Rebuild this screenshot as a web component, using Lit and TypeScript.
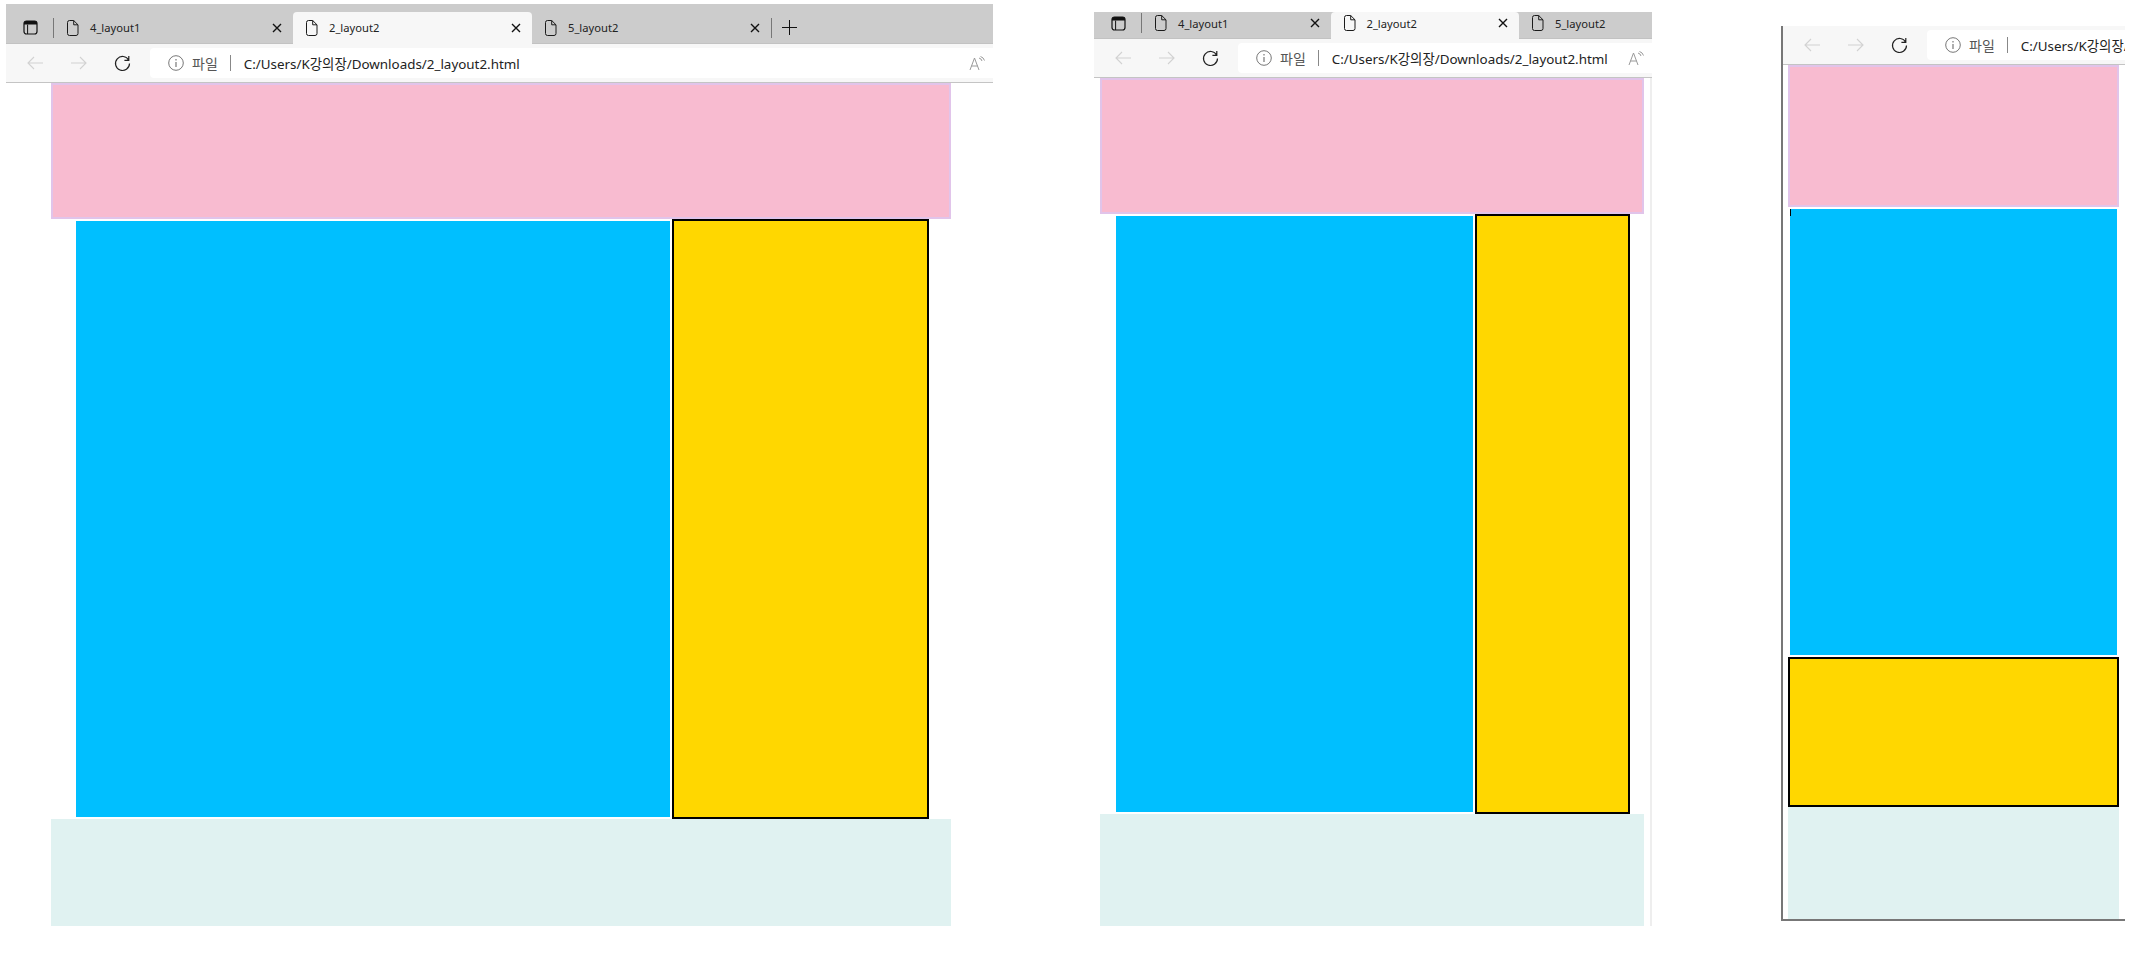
import { css, html, LitElement, svg } from 'lit';
import { customElement } from 'lit/decorators.js';

const URL_TEXT = 'C:/Users/K강의장/Downloads/2_layout2.html';

const docIcon = html`<svg class="doc" viewBox="0 0 13 16" width="13" height="16">
  <path d="M1.5 2.5a2 2 0 0 1 2-2h4.2l4.3 4.3v8.7a2 2 0 0 1-2 2h-6.5a2 2 0 0 1-2-2zM7.7.5v4.3H12" fill="none" stroke="#1a1a1a" stroke-width="1"/>
</svg>`;

const closeIcon = html`<svg class="close" viewBox="0 0 10 10" width="10" height="10">
  <path d="M1 1l8 8M9 1l-8 8" stroke="#111" stroke-width="1.4" fill="none"/>
</svg>`;

const layoutIcon = html`<svg class="layout" viewBox="0 0 15 15" width="15" height="15">
  <rect x="1" y="1" width="13" height="13" rx="2.5" fill="none" stroke="#111" stroke-width="1.2"/>
  <path d="M1 4.6V3.5A2.5 2.5 0 0 1 3.5 1h8A2.5 2.5 0 0 1 14 3.5v1.100z" fill="#111"/>
  <path d="M4.600 4.600V14" stroke="#111" stroke-width="1"/>
</svg>`;

const arrowPath = (flip: boolean) => svg`<path
  d=${flip ? 'M1 8h15M10 2l6 6-6 6' : 'M17 8H2M8 2L2 8l6 6'}
  fill="none" stroke="#d2d2d2" stroke-width="1.1"/>`;

interface WindowSpec {
  name: string;
  tabs: string[];
}

const WINDOWS: WindowSpec[] = [
  { name: 'w1', tabs: ['4_layout1', '2_layout2', '5_layout2'] },
  { name: 'w2', tabs: ['4_layout1', '2_layout2', '5_layout2'] },
  { name: 'w3', tabs: [] },
];

@customElement('app-root')
export class AppRoot extends LitElement {
  static styles = css`
    :host {
      display: flex;
      align-items: flex-start;
      height: 980px;
      overflow: hidden;
      background: #fff;
      font-family: 'Noto Sans', 'Noto Sans CJK KR', sans-serif;
    }
    svg {
      flex: none;
    }
    .window {
      flex: none;
      overflow: hidden;
    }
    .w1 {
      width: 987px;
      margin: 4px 0 0 6px;
    }
    .w2 {
      width: 558px;
      margin: 12px 0 0 101px;
    }
    .w3 {
      width: 342px;
      margin: 26px 0 0 129px;
      border-left: 2px solid #777;
      border-bottom: 2px solid #777;
    }
    .strip {
      display: flex;
      background: #ccc;
      overflow: hidden;
      box-shadow: inset 0 -1px #c2c2c2;
    }
    .w1 .strip {
      height: 40px;
      padding-top: 8px;
      box-sizing: border-box;
    }
    .w2 .strip {
      height: 27px;
    }
    .strip-start {
      flex: none;
      display: flex;
      align-items: center;
      width: 48px;
      padding-left: 17px;
      box-sizing: border-box;
    }
    .sep {
      flex: none;
      width: 1px;
      height: 20px;
      background: #777;
      margin-left: 15px;
    }
    .w1 .strip-start, .w1 .tab, .w1 .plus-box {
      padding-bottom: 1px;
    }
    .w2 .strip-start, .w2 .tab {
      padding-bottom: 5px;
    }
    .tab {
      flex: none;
      display: flex;
      align-items: center;
      gap: 11px;
      box-sizing: border-box;
      padding-left: 12px;
      padding-right: 11px;
      font-size: 11.2px;
      color: #222;
    }
    .w1 .tab {
      width: 239px;
    }
    .w2 .tab {
      width: 188.5px;
    }
    .tab.active {
      background: #f7f7f7;
      border-radius: 4px 4px 0 0;
    }
    .tab .title {
      flex: 1;
      white-space: nowrap;
    }
    .plus-box {
      flex: none;
      display: flex;
      align-items: center;
      gap: 10px;
    }
    .plus-sep {
      flex: none;
      width: 1px;
      height: 20px;
      background: #777;
    }
    .toolbar {
      display: flex;
      align-items: flex-start;
      height: 39px;
      box-sizing: border-box;
      padding: 4px 0 0 20px;
      background: #f7f7f7;
      border-bottom: 1px solid #c4c4c4;
    }
    .nav {
      flex: none;
      display: flex;
      align-items: center;
      height: 30px;
      gap: 26px;
      width: 124px;
    }
    .address {
      flex: 1;
      min-width: 0;
      display: flex;
      align-items: center;
      height: 30px;
      padding-left: 18px;
      padding-right: 8px;
      background: #fff;
      border-radius: 4px 0 0 4px;
      white-space: nowrap;
      overflow: hidden;
    }
    .scheme {
      margin-left: 8px;
      font-size: 14px;
      color: #555;
    }
    .bar {
      flex: none;
      width: 1px;
      height: 16px;
      background: #888;
      margin: 0 13px 0 12px;
    }
    .url {
      flex: 1;
      font-size: 13.4px;
      color: #222;
    }
    .pink {
      box-sizing: border-box;
      background: #f8bbd0;
      border: 2px solid #e1c4ea;
    }
    .main {
      display: flex;
    }
    .blue {
      flex: none;
      margin: 2px;
      background: #00bfff;
    }
    .gold {
      flex: none;
      box-sizing: border-box;
      background: #ffd700;
      border: 2px solid #000;
    }
    .mint {
      background: #e0f2f1;
    }

    .w1 .page {
      padding-left: 45px;
      width: 900px;
    }
    .w1 .pink { height: 136px; }
    .w1 .main { height: 600px; padding-left: 23px; }
    .w1 .blue { width: 594px; }
    .w1 .gold { width: 257px; }
    .w1 .mint { height: 107px; }

    .w2 .page {
      padding-left: 6px;
      width: 544px;
      padding-right: 6px;
      border-right: 2px solid #eee;
    }
    .w2 .pink { height: 136px; }
    .w2 .main { height: 600px; padding-left: 14px; }
    .w2 .blue { width: 357px; }
    .w2 .gold { width: 155px; }
    .w2 .mint { height: 112px; }

    .w3 .page {
      padding-left: 5px;
      width: 331px;
    }
    .w3 .pink { height: 142px; }
    .w3 .stack {
      display: flex;
      flex-direction: column;
      position: relative;
    }
    .w3 .blue { height: 446px; }
    .w3 .gold { height: 150px; }
    .w3 .mint { height: 112px; }
    .caret {
      position: absolute;
      left: 2px;
      top: 2px;
      width: 1px;
      height: 7px;
      background: #000;
    }
  `;

  private _renderStrip(spec: WindowSpec) {
    return html`
      <div class="strip">
        <div class="strip-start">${layoutIcon}<span class="sep"></span></div>
        ${spec.tabs.map((label, i) => html`
          <div class="tab ${i === 1 ? 'active' : ''}">
            ${docIcon}
            <span class="title">${label}</span>
            ${closeIcon}
          </div>
        `)}
        <div class="plus-box">
          <span class="plus-sep"></span>
          <svg viewBox="0 0 15 15" width="15" height="15">
            <path d="M7.500 0v15M0 7.500h15" stroke="#111" stroke-width="1"/>
          </svg>
        </div>
      </div>
    `;
  }

  private _renderToolbar() {
    return html`
      <div class="toolbar">
        <div class="nav">
          <svg viewBox="0 0 18 16" width="18" height="16">${arrowPath(false)}</svg>
          <svg viewBox="0 0 18 16" width="18" height="16">${arrowPath(true)}</svg>
          <svg viewBox="0 0 17 17" width="17" height="17">
            <path d="M14.700 5.200A7 7 0 1 0 15.500 8.500M14.800 1v4.400h-4.400" fill="none" stroke="#222" stroke-width="1.200"/>
          </svg>
        </div>
        <div class="address">
          <svg viewBox="0 0 16 16" width="16" height="16">
            <circle cx="8" cy="8" r="7.300" fill="none" stroke="#777" stroke-width="1"/>
            <path d="M8 7v5M8 4v1.500" stroke="#777" stroke-width="1.200"/>
          </svg>
          <span class="scheme">파일</span>
          <span class="bar"></span>
          <span class="url">${URL_TEXT}</span>
          <svg viewBox="0 0 16 15" width="16" height="15">
            <path d="M1 14L5.500 2 10 14M2.500 10h6M10 2a4 4 0 0 1 3 3M11.500.500a6 6 0 0 1 4 4" fill="none" stroke="#999" stroke-width="1"/>
          </svg>
        </div>
      </div>
    `;
  }

  private _renderWindow(spec: WindowSpec) {
    const stacked = spec.name === 'w3';
    return html`
      <div class="window ${spec.name}">
        ${spec.tabs.length ? this._renderStrip(spec) : ''}
        ${this._renderToolbar()}
        <div class="page">
          <div class="pink"></div>
          <div class=${stacked ? 'stack' : 'main'}>
            <div class="blue"></div>
            <div class="gold"></div>
            ${stacked ? html`<span class="caret"></span>` : ''}
          </div>
          <div class="mint"></div>
        </div>
      </div>
    `;
  }

  render() {
    return WINDOWS.map(spec => this._renderWindow(spec));
  }
}
